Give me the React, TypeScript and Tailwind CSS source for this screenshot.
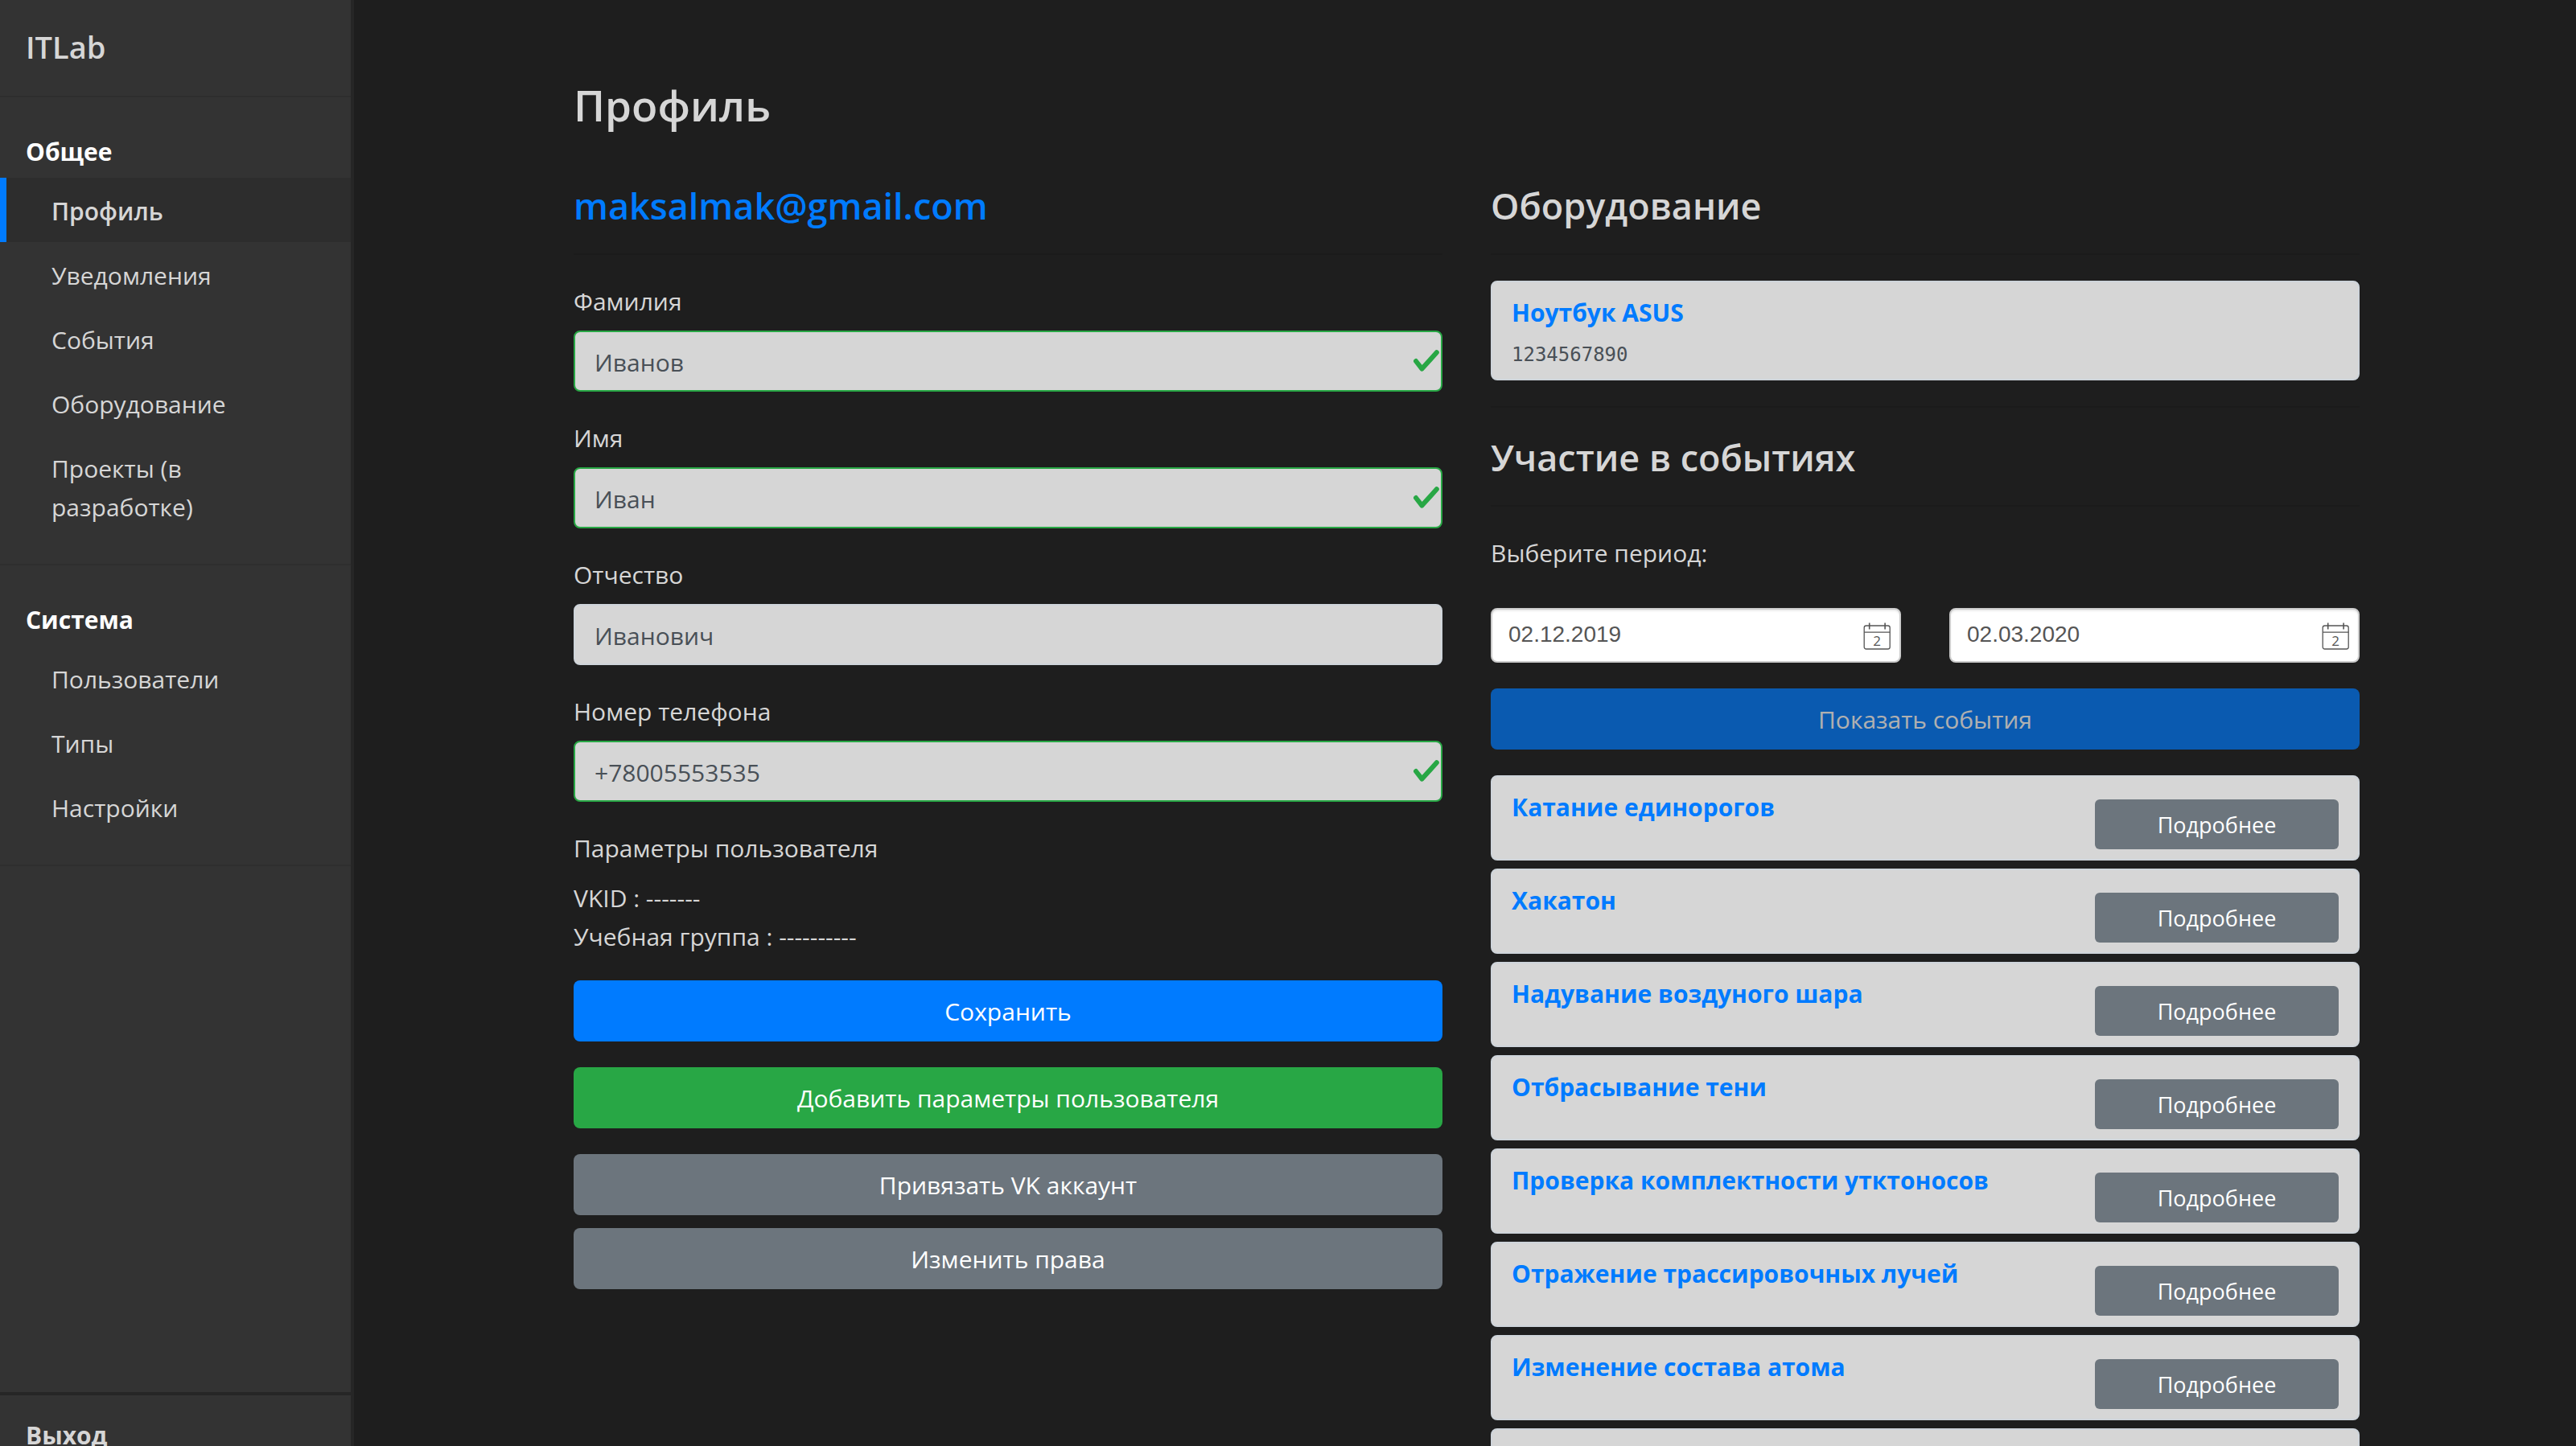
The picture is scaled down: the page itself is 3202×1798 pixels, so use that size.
import React from 'react';

const generalLinks = ['Профиль', 'Уведомления', 'События', 'Оборудование', 'Проекты (в разработке)'];
const systemLinks = ['Пользователи', 'Типы', 'Настройки'];

const fields = [
  { id: 'lastName', label: 'Фамилия', value: 'Иванов', valid: true },
  { id: 'firstName', label: 'Имя', value: 'Иван', valid: true },
  { id: 'middleName', label: 'Отчество', value: 'Иванович', valid: false },
  { id: 'phone', label: 'Номер телефона', value: '+78005553535', valid: true },
];

const events = [
  'Катание единорогов',
  'Хакатон',
  'Надувание воздуного шара',
  'Отбрасывание тени',
  'Проверка комплектности утктоносов',
  'Отражение трассировочных лучей',
  'Изменение состава атома',
];

function NavSection({ title, links, active }: { title: string; links: string[]; active?: string }) {
  return (
    <section className="border-b-2 border-[#2e2e2e] pb-8">
      <h2 className="px-8 pt-11 pb-2 font-bold text-white">{title}</h2>
      <ul>
        {links.map((link) => (
          <li key={link}>
            <a
              href="#"
              className={
                link === active
                  ? 'block border-l-8 border-[#007bff] bg-[#2d2d2d] pt-[18px] pr-20 pb-[14px] pl-14 font-semibold'
                  : 'block border-l-8 border-transparent pt-[18px] pr-20 pb-[14px] pl-14'
              }
            >
              {link}
            </a>
          </li>
        ))}
      </ul>
    </section>
  );
}

function CheckMark() {
  return (
    <svg
      className="pointer-events-none absolute top-6 right-1 h-7 w-8"
      viewBox="0 0 32 28"
      fill="none"
      stroke="#28a745"
      strokeWidth="6"
      strokeLinecap="round"
      strokeLinejoin="round"
      aria-hidden="true"
    >
      <path d="M3 14 10.5 23.6 28.8 3.2" />
    </svg>
  );
}

function CalendarIcon() {
  return (
    <svg className="h-[35px] w-9" viewBox="0 0 36 35" fill="none" stroke="#555" strokeWidth="1.3" aria-hidden="true">
      <rect x="1.2" y="4" width="32" height="29" rx="2.5" />
      <path d="M1.2 12.2h32" />
      <path d="M7.7.5v8M27.1.5v8" strokeWidth="1.6" />
      <text x="17.2" y="28.5" textAnchor="middle" fontSize="17" fill="#555" stroke="none">
        2
      </text>
    </svg>
  );
}

function DateField({ label, value }: { label: string; value: string }) {
  return (
    <div className="relative flex-1">
      <input
        type="text"
        aria-label={label}
        defaultValue={value}
        className="block h-[68px] w-full rounded-lg border-2 border-[#ccc] bg-white px-5 pb-0.5 font-['Liberation_Sans',sans-serif] text-[28px] text-[#555] shadow-[inset_0_2px_2px_rgba(0,0,0,0.08)]"
      />
      <button type="button" aria-label="Открыть календарь" className="absolute top-[18px] right-[11px]">
        <CalendarIcon />
      </button>
    </div>
  );
}

function Divider() {
  return <hr className="my-8 border-t-2 border-[#1b1b1b]" />;
}

const heading = 'pt-0.5 text-[45px] leading-[55px] font-semibold';
const button = 'block h-[76px] w-full rounded-lg pt-0.5 text-center text-white';

export default function App() {
  return (
    <div className="flex h-screen overflow-hidden bg-[#1e1e1e] font-['Open_Sans','Noto_Sans',sans-serif] text-[30px] leading-[48px] text-[#d6d6d6]">
      <aside className="flex w-[440px] shrink-0 flex-col border-r-4 border-[#262626] bg-[#333]">
        <div className="flex h-[121px] items-center border-b-2 border-[#2e2e2e] px-8 pb-1">
          <a href="#" className="text-[38px] font-semibold">ITLab</a>
        </div>
        <nav className="flex-1">
          <NavSection title="Общее" links={generalLinks} active="Профиль" />
          <NavSection title="Система" links={systemLinks} />
        </nav>
        <div className="h-[67px] shrink-0 overflow-hidden border-t-4 border-[#262626] px-8 pt-[26px]">
          <button type="button" className="block font-bold">Выход</button>
        </div>
      </aside>

      <main className="min-w-0 flex-1 overflow-hidden pl-1">
        <div className="mx-auto max-w-[2280px] px-[30px] pt-24">
          <h1 className="text-[53px] leading-[69px] font-semibold">Профиль</h1>
          <div className="mt-[61px] grid grid-cols-2 gap-[60px]">
            <section>
              <h2 className={heading}>
                <a href="mailto:maksalmak@gmail.com" className="text-[#007bff]">maksalmak@gmail.com</a>
              </h2>
              <Divider />
              <form>
                {fields.map((f) => (
                  <div key={f.id} className="mb-8">
                    <label htmlFor={f.id} className="mb-3 block pt-0.5">{f.label}</label>
                    <div className="relative">
                      <input
                        id={f.id}
                        type="text"
                        defaultValue={f.value}
                        className={
                          f.valid
                            ? 'block h-[76px] w-full rounded-lg border-2 border-[#28a745] bg-[#d6d6d6] px-6 pt-0.5 text-[#495057]'
                            : 'block h-[76px] w-full rounded-lg border-2 border-[#ced4da] bg-[#d6d6d6] px-6 pt-0.5 text-[#495057]'
                        }
                      />
                      {f.valid && <CheckMark />}
                    </div>
                  </div>
                ))}
                <h3 className="mb-3 pt-0.5">Параметры пользователя</h3>
                <div className="pt-0.5 pb-[30px]">
                  <p>VKID : -------</p>
                  <p>Учебная группа : ----------</p>
                </div>
                <button type="button" className={`${button} bg-[#007bff]`}>Сохранить</button>
                <button type="button" className={`${button} mt-8 bg-[#28a745]`}>Добавить параметры пользователя</button>
                <button type="button" className={`${button} mt-8 bg-[#6c757d]`}>Привязать VK аккаунт</button>
                <button type="button" className={`${button} mt-4 bg-[#6c757d]`}>Изменить права</button>
              </form>
            </section>

            <section>
              <h2 className={heading}>Оборудование</h2>
              <Divider />
              <article className="rounded-lg border-2 border-[#ced4da] bg-[#d6d6d6] px-6 pt-[14px] pb-0.5">
                <a href="#" className="block font-bold text-[#007bff]">Ноутбук ASUS</a>
                <p className="font-['DejaVu_Sans_Mono',monospace] text-[24px] leading-[56px] text-[#495057]">1234567890</p>
              </article>
              <Divider />
              <h2 className={heading}>Участие в событиях</h2>
              <Divider />
              <p className="pt-0.5">Выберите период:</p>
              <div className="mt-11 flex gap-[60px]">
                <DateField label="Начало периода" value="02.12.2019" />
                <DateField label="Конец периода" value="02.03.2020" />
              </div>
              <button type="button" disabled className={`${button} mt-8 bg-[#007bff] opacity-65`}>Показать события</button>
              <div className="mt-8 flex flex-col gap-[10px]">
                {events.map((title) => (
                  <article
                    key={title}
                    className="flex justify-between rounded-lg border-2 border-[#ced4da] bg-[#d6d6d6] px-6 pt-[14px] pb-3"
                  >
                    <a href="#" className="font-bold text-[#007bff]">{title}</a>
                    <button type="button" className="mt-[14px] h-[62px] w-[303px] rounded-md bg-[#6c757d] pt-0.5 text-[27px] text-white">
                      Подробнее
                    </button>
                  </article>
                ))}
                <article className="h-[106px] rounded-lg border-2 border-[#ced4da] bg-[#d6d6d6]" />
              </div>
            </section>
          </div>
        </div>
      </main>
    </div>
  );
}
